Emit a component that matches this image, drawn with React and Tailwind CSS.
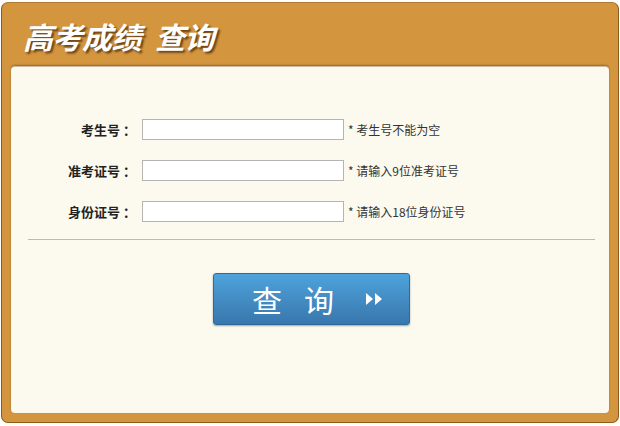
import React from 'react';

const cjk = { fontFamily: '"Microsoft YaHei", "Noto Sans CJK SC", "Noto Sans", sans-serif' };

function Row({ label, hint }) {
  return (
    <div className="flex items-center h-[21px]">
      <label className="w-[129px] text-right text-[13px] font-bold text-[#222] pr-[4px]">{label} ：</label>
      <input type="text" className="ml-[2px] w-[202px] h-[21px] border border-[#b4b4b4] bg-white outline-none" />
      <span className="ml-[4px] text-[12px] text-[#333]">* {hint}</span>
    </div>
  );
}

export default function App() {
  return (
    <div className="w-[620px] h-[426px] bg-white pt-[2px] pl-[1px]" style={cjk}>
      <div className="w-[618px] h-[421px] bg-[#d4953f] border border-[#8c5a1a] border-t-[#b07a34] rounded-[7px] flex flex-col px-[9px] pb-[9px]">
        <div className="h-[63px] flex items-center pl-[12px] pt-[3px]">
          <h1 className="text-[30px] font-bold italic text-white tracking-[-0.5px] [text-shadow:2px_2px_2px_rgba(70,40,10,0.75)]">
            高考成绩<span className="inline-block w-[14px]" />查询
          </h1>
        </div>
        <div className="flex-1 bg-[#fcf9ee] rounded-[4px] shadow-[0_-1px_2px_rgba(80,50,10,0.45)] border-t border-[#c9bca0] flex flex-col">
          <div className="pt-[52px] flex flex-col gap-[20px]">
            <Row label="考生号" hint="考生号不能为空" />
            <Row label="准考证号" hint="请输入9位准考证号" />
            <Row label="身份证号" hint="请输入18位身份证号" />
          </div>
          <div className="ml-[17px] mr-[14px] mt-[17px] h-[1px] bg-[#c3bc94]" />
          <div className="flex justify-center pt-[33px] pl-[2px]">
            <button className="w-[197px] h-[52px] rounded-[3px] border border-[#2f6a9c] bg-gradient-to-b from-[#4ea3dc] to-[#3877ad] shadow-[0_1px_2px_rgba(0,0,0,0.35)] flex items-center justify-center text-white">
              <span className="text-[30px] tracking-[22px] pl-[14px]">查询</span>
              <svg width="20" height="14" viewBox="0 0 20 14" className="ml-[8px]">
                <polygon points="2,1 9,7 2,13" fill="white" />
                <polygon points="11,1 18,7 11,13" fill="white" />
              </svg>
            </button>
          </div>
        </div>
      </div>
    </div>
  );
}
